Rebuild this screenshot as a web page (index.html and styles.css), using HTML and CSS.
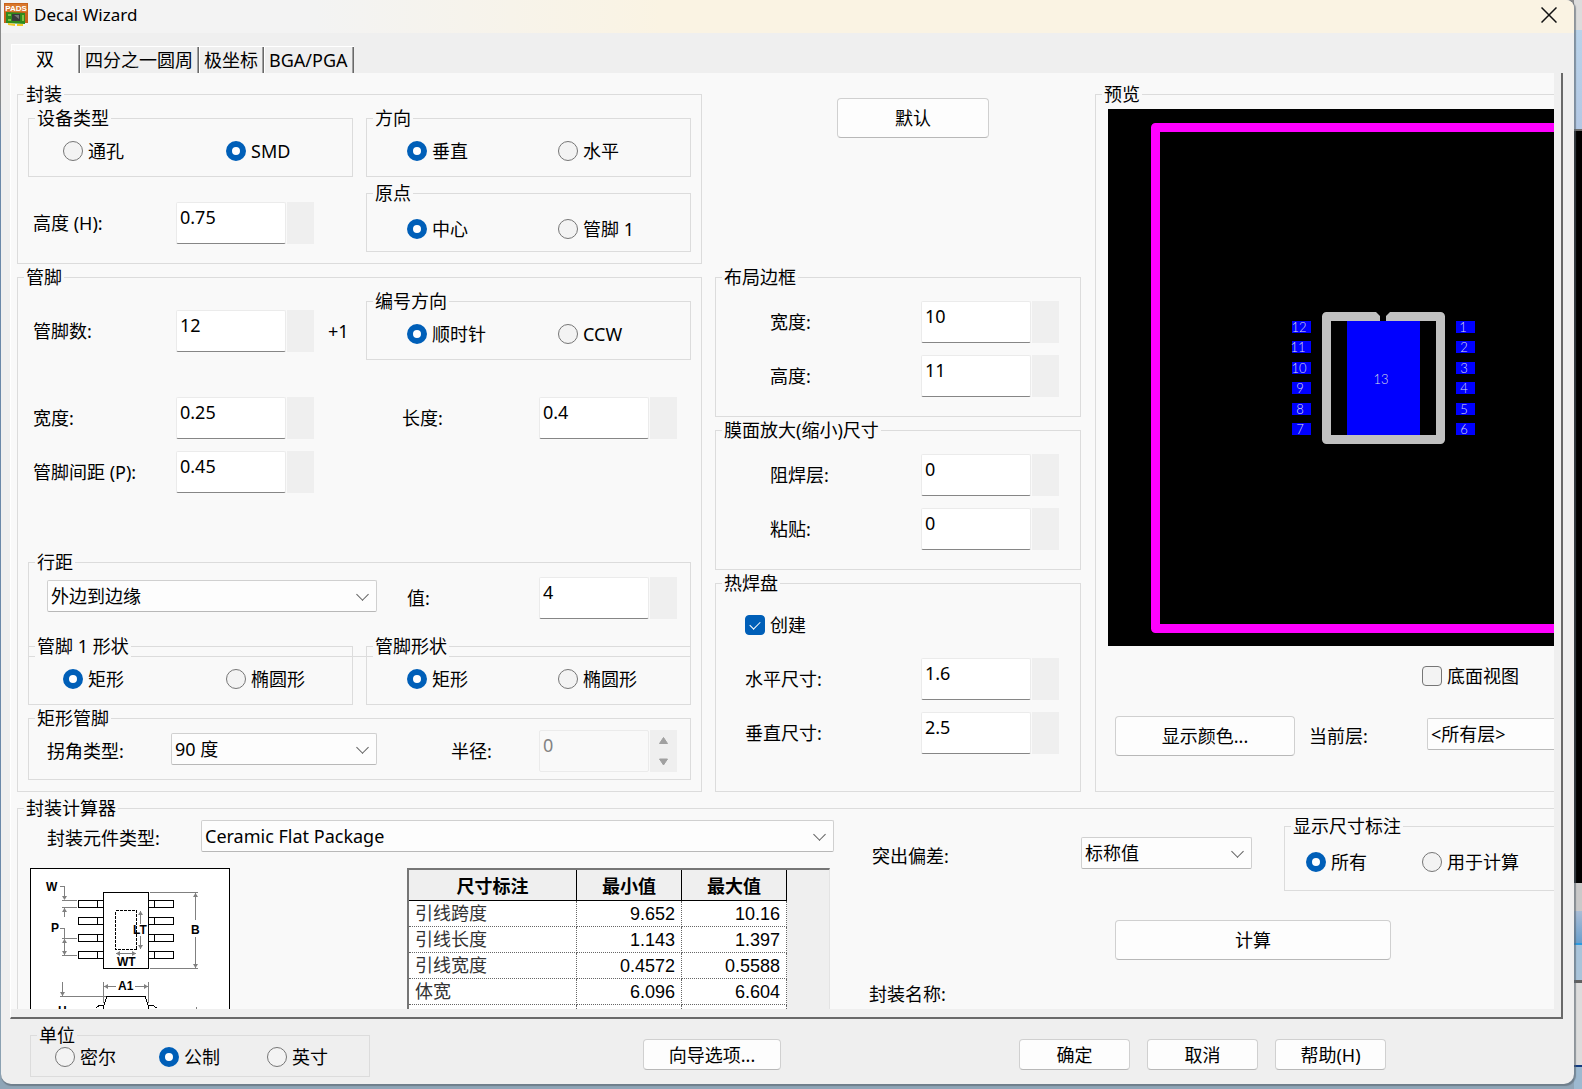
FILE: index.html
```html
<!DOCTYPE html>
<html lang="zh-CN">
<head>
<meta charset="utf-8">
<title>Decal Wizard</title>
<link rel="stylesheet" href="styles.css">
</head>
<body>
<main class="window">
  <header class="titlebar">
    <svg class="app-icon" width="24" height="24" viewBox="0 0 24 24" aria-hidden="true">
      <rect width="24" height="20" fill="#c8631c"/>
      <rect x="1" y="1" width="22" height="8" fill="#d9772c"/>
      <text x="12" y="8" text-anchor="middle" class="app-icon-text">PADS</text>
      <path d="M2 9l19 1v11l-19-1z" fill="#2f8a1d"/>
      <path d="M4 11h3v2H4zM4 16h3v2H4zM18 12h2v6h-2z" fill="#7fc043"/>
      <rect x="8" y="11" width="8" height="7" fill="#3b3b3b"/>
      <path d="M10 12h5v4z" fill="#777"/>
      <path d="M4 20l7 1v2l-7-1zM13 21h6v2h-6z" fill="#f2c81e"/>
    </svg>
    <h1 class="title">Decal Wizard</h1>
    <button class="close" type="button" aria-label="关闭">
      <svg width="16" height="16" viewBox="0 0 16 16"><path d="M.5.5l15 15M15.5.5l-15 15" stroke="#111" stroke-width="1.500" fill="none"/></svg>
    </button>
  </header>

  <nav class="tabs" role="tablist">
    <button class="tab tab-active" type="button" role="tab" aria-selected="true">双</button>
    <button class="tab" type="button" role="tab">四分之一圆周</button>
    <button class="tab" type="button" role="tab">极坐标</button>
    <button class="tab" type="button" role="tab">BGA/PGA</button>
  </nav>

  <section class="pane">
    <div class="page">
      <div class="columns">
        <div class="column">
          <fieldset class="group package">
            <legend>封装</legend>
            <div class="stack">
              <fieldset class="group options options-a">
                <legend>设备类型</legend>
                <label class="choice"><input type="radio" name="device">通孔</label>
                <label class="choice"><input type="radio" name="device" checked>SMD</label>
              </fieldset>
              <div class="field-row height-row">
                <label for="height">高度 (H):</label>
                <span class="number"><input id="height" type="text" value="0.75"><span class="spin"></span></span>
              </div>
            </div>
            <div class="stack stack-gap">
              <fieldset class="group options options-b">
                <legend>方向</legend>
                <label class="choice"><input type="radio" name="orient" checked>垂直</label>
                <label class="choice"><input type="radio" name="orient">水平</label>
              </fieldset>
              <fieldset class="group options options-b options-low">
                <legend>原点</legend>
                <label class="choice"><input type="radio" name="origin" checked>中心</label>
                <label class="choice"><input type="radio" name="origin">管脚 1</label>
              </fieldset>
            </div>
          </fieldset>

          <fieldset class="group pins">
            <legend>管脚</legend>
            <div class="halves">
              <div class="field-row count-row">
                <label for="count">管脚数:</label>
                <span class="number"><input id="count" type="text" value="12"><span class="spin"></span></span>
                <span class="plus">+1</span>
              </div>
              <fieldset class="group options options-b">
                <legend>编号方向</legend>
                <label class="choice"><input type="radio" name="numdir" checked>顺时针</label>
                <label class="choice"><input type="radio" name="numdir">CCW</label>
              </fieldset>
            </div>
            <div class="pin-sizes">
              <label for="pin-w">宽度:</label>
              <span class="number"><input id="pin-w" type="text" value="0.25"><span class="spin"></span></span>
              <label for="pin-l">长度:</label>
              <span class="number"><input id="pin-l" type="text" value="0.4"><span class="spin"></span></span>
              <label for="pitch">管脚间距 (P):</label>
              <span class="number"><input id="pitch" type="text" value="0.45"><span class="spin"></span></span>
            </div>
            <fieldset class="group spacing">
              <legend>行距</legend>
              <span class="select"><select aria-label="行距"><option>外边到边缘</option></select></span>
              <label for="row-v">值:</label>
              <span class="number"><input id="row-v" type="text" value="4"><span class="spin"></span></span>
            </fieldset>
            <div class="halves shapes">
              <fieldset class="group options options-a">
                <legend>管脚 1 形状</legend>
                <label class="choice"><input type="radio" name="shape1" checked>矩形</label>
                <label class="choice"><input type="radio" name="shape1">椭圆形</label>
              </fieldset>
              <fieldset class="group options options-b">
                <legend>管脚形状</legend>
                <label class="choice"><input type="radio" name="shape" checked>矩形</label>
                <label class="choice"><input type="radio" name="shape">椭圆形</label>
              </fieldset>
            </div>
            <fieldset class="group corners">
              <legend>矩形管脚</legend>
              <label for="corner">拐角类型:</label>
              <span class="select"><select id="corner"><option>90 度</option></select></span>
              <label for="radius">半径:</label>
              <span class="number"><input id="radius" type="text" value="0" disabled><span class="spin"><svg width="27" height="42" viewBox="0 0 27 42"><path d="M13.500 7.500l4 6h-8zM9.500 29h8l-4 6z" fill="#a0a0a0" stroke="#a0a0a0" stroke-linejoin="round"/></svg></span></span>
            </fieldset>
          </fieldset>
        </div>

        <div class="column">
          <button class="btn default-btn" type="button">默认</button>
          <fieldset class="group sizes">
            <legend>布局边框</legend>
            <label for="lay-w">宽度:</label>
            <span class="number"><input id="lay-w" type="text" value="10"><span class="spin"></span></span>
            <label for="lay-h">高度:</label>
            <span class="number"><input id="lay-h" type="text" value="11"><span class="spin"></span></span>
          </fieldset>
          <fieldset class="group sizes">
            <legend>膜面放大(缩小)尺寸</legend>
            <label for="solder">阻焊层:</label>
            <span class="number"><input id="solder" type="text" value="0"><span class="spin"></span></span>
            <label for="paste">粘贴:</label>
            <span class="number"><input id="paste" type="text" value="0"><span class="spin"></span></span>
          </fieldset>
          <fieldset class="group sizes thermal">
            <legend>热焊盘</legend>
            <label class="choice create"><input type="checkbox" checked>创建</label>
            <label for="th-x">水平尺寸:</label>
            <span class="number"><input id="th-x" type="text" value="1.6"><span class="spin"></span></span>
            <label for="th-y">垂直尺寸:</label>
            <span class="number"><input id="th-y" type="text" value="2.5"><span class="spin"></span></span>
          </fieldset>
        </div>

        <fieldset class="group preview">
          <legend>预览</legend>
          <svg class="canvas" role="img" aria-label="封装预览">
            <rect x="47.500" y="18.500" width="700" height="501" fill="none" stroke="#f0f" stroke-width="9" stroke-linejoin="round"/>
            <rect x="239" y="212" width="73" height="114" fill="#00f"/>
            <path d="M268 207.500H218.500V330.500H332.500V207.500H282" fill="none" stroke="#c0c0c0" stroke-width="9" stroke-linejoin="round"/>
            <path d="M268 203l4 4v5h-4zM282 203l-4 4v5h4z" fill="#c0c0c0"/>
            <g fill="#00f">
              <rect x="184" y="212" width="19" height="12"/><rect x="184" y="232" width="19" height="12"/>
              <rect x="184" y="253" width="19" height="12"/><rect x="184" y="273" width="19" height="12"/>
              <rect x="184" y="294" width="19" height="12"/><rect x="184" y="314" width="19" height="12"/>
              <rect x="348" y="212" width="19" height="12"/><rect x="348" y="232" width="19" height="12"/>
              <rect x="348" y="253" width="19" height="12"/><rect x="348" y="273" width="19" height="12"/>
              <rect x="348" y="294" width="19" height="12"/><rect x="348" y="314" width="19" height="12"/>
            </g>
            <g class="pad-text">
              <text x="191" y="223">12</text><text x="190" y="243">11</text><text x="191" y="264">10</text>
              <text x="192" y="284">9</text><text x="192" y="305">8</text><text x="192" y="325">7</text>
              <text x="355" y="223">1</text><text x="356" y="243">2</text><text x="356" y="264">3</text>
              <text x="356" y="284">4</text><text x="356" y="305">5</text><text x="356" y="325">6</text>
              <text x="273" y="275">13</text>
            </g>
          </svg>
          <label class="choice bottom-view"><input type="checkbox">底面视图</label>
          <div class="layer-row">
            <button class="btn colors-btn" type="button">显示颜色...</button>
            <label for="layer">当前层:</label>
            <span class="select layer"><select id="layer"><option>&lt;所有层&gt;</option></select></span>
          </div>
        </fieldset>
      </div>

      <fieldset class="group calculator">
        <legend>封装计算器</legend>
        <div class="calc-left">
          <div class="type-row">
            <label for="ptype">封装元件类型:</label>
            <span class="select"><select id="ptype"><option>Ceramic Flat Package</option></select></span>
          </div>
          <div class="calc-detail">
            <svg class="diagram" width="200" height="260" viewBox="0 0 200 260" role="img" aria-label="尺寸示意图">
              <rect x=".5" y=".5" width="199" height="259" fill="#fff" stroke="#000"/>
              <g fill="none" stroke="#000" shape-rendering="crispEdges">
                <rect x="73.500" y="24.500" width="45" height="76"/>
                <path d="M73.500 32.500h-25v7h25M67.500 32.500v7M73.500 49.500h-25v7h25M67.500 49.500v7M73.500 66.500h-25v7h25M67.500 66.500v7M73.500 83.500h-25v7h25M67.500 83.500v7"/>
                <path d="M118.500 32.500h25v7h-25M124.500 32.500v7M118.500 49.500h25v7h-25M124.500 49.500v7M118.500 66.500h25v7h-25M124.500 66.500v7M118.500 83.500h25v7h-25M124.500 83.500v7"/>
                <rect x="85.500" y="42.500" width="21" height="39" stroke-dasharray="3 1"/>
                <path d="M66 140l4-3h4l3-8.500h38l3 8.500h4l5 3M73.500 137v14h45v-14"/>
              </g>
              <g fill="none" stroke="#808080" shape-rendering="crispEdges">
                <path d="M30 18.500h4.500V31M32 32.500h15M32 39.500h15M34.500 40v9M30 60.500h4.500V70M32 70.500h15M32 87.500h15M34.500 71v16"/>
                <path d="M110.500 43v13M110.500 68v13M86 85.500h20M120 24.500h48M120 100.500h48M165.500 25v27M165.500 69v31"/>
                <path d="M74 118.500h12M105 118.500h13M73.500 114v21M118.500 114v21M32.500 114v14M30 128.500h46M166.500 139v20"/>
              </g>
              <path fill="#808080" d="M32 28h5l-2.500 4zM32 44h5l-2.500-4zM32 75h5l-2.500-4zM32 83h5l-2.500 4zM108 47h5l-2.500-4zM108 77h5l-2.500 4zM163 29h5l-2.500-4zM163 96h5l-2.500 4zM30 124h5l-2.500 4zM78 116v5l-4-2.500zM114 116v5l4-2.500zM90 83v5l-4-2.500zM102 83v5l4-2.500z"/>
              <g class="dim-text">
                <text x="16" y="23">W</text><text x="21" y="64">P</text><text x="103" y="66">LT</text>
                <text x="87" y="98">WT</text><text x="161" y="66">B</text><text x="88" y="122">A1</text><text x="28" y="147">H</text>
              </g>
            </svg>
            <div class="table-box">
              <table class="dims">
                <thead><tr><th class="col-name">尺寸标注</th><th>最小值</th><th>最大值</th></tr></thead>
                <tbody>
                  <tr><td>引线跨度</td><td>9.652</td><td>10.16</td></tr>
                  <tr><td>引线长度</td><td>1.143</td><td>1.397</td></tr>
                  <tr><td>引线宽度</td><td>0.4572</td><td>0.5588</td></tr>
                  <tr><td>体宽</td><td>6.096</td><td>6.604</td></tr>
                  <tr><td></td><td></td><td></td></tr>
                </tbody>
              </table>
            </div>
          </div>
        </div>
        <div class="calc-right">
          <div class="bias-row">
            <label for="bias">突出偏差:</label>
            <span class="select"><select id="bias"><option>标称值</option></select></span>
            <fieldset class="group options options-c">
              <legend>显示尺寸标注</legend>
              <label class="choice"><input type="radio" name="show" checked>所有</label>
              <label class="choice"><input type="radio" name="show">用于计算</label>
            </fieldset>
          </div>
          <button class="btn calc-btn" type="button">计算</button>
          <span class="name-label">封装名称:</span>
        </div>
      </fieldset>
    </div>
  </section>

  <footer class="footer">
    <fieldset class="group units">
      <legend>单位</legend>
      <label class="choice"><input type="radio" name="unit">密尔</label>
      <label class="choice"><input type="radio" name="unit" checked>公制</label>
      <label class="choice"><input type="radio" name="unit">英寸</label>
    </fieldset>
    <button class="btn wizard-btn" type="button">向导选项...</button>
    <div class="dialog-buttons">
      <button class="btn" type="button">确定</button>
      <button class="btn" type="button">取消</button>
      <button class="btn" type="button">帮助(H)</button>
    </div>
  </footer>
</main>
</body>
</html>
```

FILE: styles.css
```css
* { box-sizing: border-box; }

body {
  margin: 0;
  height: 100vh;
  padding: 0 8px 5px 1px;
  overflow: hidden;
  font: 18px/24px "Noto Sans", "Noto Sans CJK SC", sans-serif;
  color: #000;
  background:
    linear-gradient(#dcdcdc 30px, #b9d3ea 30px, #b3c8e4 129px, #6e6e6e 129px, #6e6e6e 131px,
      #000 131px, #000 883px, #c9c9c9 883px, #c9c9c9 911px, #a9bdd6 911px, #6a9fcc 943px,
      #2a9ae0 943px, #2a9ae0 945px, #a9c4da 945px, #a9c4da 980px, #606060 980px, #606060 983px,
      #dcdcdc 983px, #dcdcdc 1065px, #123a80 1065px, #123a80 1067px, #9db9d0 1067px)
      right / 8px 100% no-repeat,
    linear-gradient(#8d8d8d 100px, #6d8cae 130px, #6d8cae 880px, #8fa5b7 1000px);
}

.window {
  display: flex;
  flex-direction: column;
  height: 100%;
  background: #efefef;
  border-radius: 0 8px 10px 10px;
  box-shadow: 1px 1px 1px 1px rgba(90, 100, 110, .6);
  overflow: hidden;
}

button, input, select { font: inherit; color: inherit; }

/* Title bar */
.titlebar {
  display: flex;
  align-items: center;
  flex: none;
  height: 33px;
  padding: 0 17px 4px 3px;
  background: linear-gradient(90deg, #f3f3f3 20%, #faf3e3 42%);
}
.app-icon-text { font: bold 8px "Liberation Sans", sans-serif; fill: #fff; }
.title { margin: 0 auto 0 6px; font-size: 17px; font-weight: 400; }
.close { display: flex; padding: 0; border: 0; background: none; }

/* Tabs */
.tabs { display: flex; flex: none; align-items: flex-end; height: 40px; padding-left: 10px; }
.tab {
  height: 27px;
  padding: 0 6px 0 4px;
  border: 0;
  border-top: 1px solid #fff;
  border-left: 1px solid #fff;
  background: #efefef;
  box-shadow: inset -1px 0 #696969, inset -2px 0 #a0a0a0;
  line-height: 26px;
  white-space: nowrap;
}
.tab-active { width: 69px; height: 29px; background: #f9f9f9; }

.pane {
  flex: 1;
  min-height: 0;
  margin: 0 11px 0 9px;
  padding: 0 7px 8px 0;
  border: solid #696969;
  border-width: 0 2px 2px 0;
  border-left: 1px solid #fff;
}
.page { height: 100%; overflow: hidden; padding: 10px 0 0 6px; background: #f9f9f9; }

/* Group boxes: --indent is the left padding, which the caption ignores */
.group {
  --indent: 0px;
  min-width: 0;
  margin: 0;
  padding: 0 0 0 var(--indent);
  border: 1px solid #dcdcdc;
}
.group > legend {
  margin-left: calc(6px - var(--indent));
  padding: 0 2px;
  line-height: 23px;
  background: #f9f9f9;
  white-space: nowrap;
}

/* Radios and check boxes */
.choice { display: flex; align-items: center; gap: 5px; height: 20px; white-space: nowrap; }
.choice input {
  flex: none;
  appearance: none;
  width: 20px;
  height: 20px;
  margin: 0;
  border: 1px solid #767676;
  background: #f3f3f3;
}
.choice input[type="radio"] { border-radius: 50%; }
.choice input[type="radio"]:checked { border: 6px solid #005fb8; background: #fff; }
.choice input[type="checkbox"] { display: grid; place-items: center; border-radius: 4px; }
.choice input[type="checkbox"]:checked { border-color: #005fb8; background: #005fb8; }
.choice input[type="checkbox"]:checked::after {
  content: "";
  width: 9px;
  height: 5px;
  margin-bottom: 3px;
  border: solid #fff;
  border-width: 0 0 1px 1px;
  transform: rotate(-45deg);
}

/* Number box with its spinner */
.number { display: flex; gap: 1px; height: 42px; }
.number input {
  width: 110px;
  height: 42px;
  padding: 0 3px 12px;
  border: 1px solid #ebebeb;
  border-bottom-color: #868686;
  border-radius: 2px;
  background: #fff;
}
.number input:disabled { background: #f9f9f9; border-color: #ebebeb; color: #838383; }
.spin { width: 27px; background: #efefef; }
.spin svg { display: block; }

/* Drop-downs */
.select { position: relative; display: block; height: 32px; }
.select select {
  display: block;
  appearance: none;
  width: 100%;
  height: 32px;
  padding: 0 28px 0 3px;
  border: 1px solid #d0d0d0;
  border-bottom-color: #b8b8b8;
  border-radius: 2px;
  background: #fdfdfd;
}
.select::after {
  content: "";
  position: absolute;
  right: 10px;
  top: 10px;
  width: 8px;
  height: 8px;
  border: solid #5f5f5f;
  border-width: 0 1px 1px 0;
  transform: rotate(45deg);
  pointer-events: none;
}

.btn {
  height: 40px;
  padding: 0;
  border: 1px solid #d0d0d0;
  border-bottom-color: #b8b8b8;
  border-radius: 4px;
  background: #fdfdfd;
  white-space: nowrap;
}

/* Main columns */
.columns { display: grid; grid-template-columns: 685px 366px 1fr; column-gap: 13px; margin-right: -40px; }
.column { display: flex; flex-direction: column; gap: 2px; }

.package, .pins { --indent: 10px; padding-top: 1px; padding-bottom: 11px; }
.package, .halves { display: grid; grid-template-columns: 325px 325px; gap: 13px; }
.stack { display: flex; flex-direction: column; }
.stack-gap { gap: 5px; }

.options { display: grid; align-content: start; padding-top: 11px; padding-bottom: 15px; }
.options-a { --indent: 34px; grid-template-columns: 163px 1fr; }
.options-b { --indent: 40px; grid-template-columns: 151px 1fr; }
.options-c { --indent: 21px; grid-template-columns: 116px 1fr; margin-left: 32px; padding-top: 14px; padding-bottom: 18px; }
.options-low { padding-top: 14px; padding-bottom: 12px; }

.field-row { display: grid; grid-template-columns: 143px auto 1fr; align-items: center; padding-left: 5px; }
.height-row { margin-top: 25px; }
.count-row { align-self: start; margin-top: 20px; }
.plus { margin-left: 14px; }

.pin-sizes {
  display: grid;
  grid-template-columns: 143px 226px 137px auto;
  row-gap: 12px;
  align-items: center;
  margin-top: 37px;
  padding-left: 5px;
}
.spacing, .corners { --indent: 18px; display: grid; align-items: center; margin-right: 10px; }
.spacing {
  grid-template-columns: 360px 132px auto;
  margin-top: 58px;
  padding-top: 3px;
  padding-bottom: 37px;
}
.corners { grid-template-columns: 124px 280px 88px auto; margin-top: 2px; padding-bottom: 7px; }
.spacing .select, .corners .select { margin-bottom: 4px; }
.spacing .select { width: 330px; }
.corners .select { width: 206px; }
.shapes { position: relative; margin-top: -22px; }

.default-btn { width: 152px; margin: 15px 0 126px 122px; }
.sizes {
  --indent: 54px;
  display: grid;
  grid-template-columns: 151px auto;
  row-gap: 12px;
  align-items: center;
  padding-top: 12px;
  padding-bottom: 19px;
}
.thermal {
  --indent: 29px;
  flex: 1;
  align-content: start;
  grid-template-columns: 176px auto;
  padding-top: 20px;
}
.create { grid-column: 1 / -1; margin-bottom: 11px; }

.preview { --indent: 12px; margin-left: 1px; padding-top: 3px; }
.canvas { display: block; width: 100%; height: 537px; background: #000; }
.pad-text { font: 300 13px Lato, "Liberation Sans", sans-serif; fill: #d8d8e8; text-anchor: middle; }
.bottom-view { margin: 20px 0 30px 314px; }
.layer-row { display: grid; grid-template-columns: 180px 104px 1fr; column-gap: 14px; padding-left: 7px; }
.layer-row label { padding-top: 8px; }
.layer { margin-top: 2px; }

/* Calculator */
.calculator { display: grid; grid-template-columns: 816px 1fr; column-gap: 35px; margin: 5px -40px 0 0; }
.type-row { display: grid; grid-template-columns: 154px 1fr; padding-left: 29px; }
.type-row label { padding-top: 6px; }
.calc-detail { display: flex; gap: 177px; margin-top: 16px; padding-left: 12px; }
.diagram { flex: none; }
.dim-text { font: bold 12px "Liberation Sans", sans-serif; }
.table-box {
  width: 423px;
  border: 2px solid #767676;
  border-right: 1px solid #e3e3e3;
  border-bottom: 0;
  background: #efefef;
}
.dims { border-collapse: separate; border-spacing: 0; table-layout: fixed; width: 378px; background: #fff; }
.dims th {
  height: 31px;
  padding: 0;
  border: solid #000;
  border-width: 0 1px 1px 0;
  background: #efefef;
  font: bold 18px/24px "Noto Sans CJK SC", sans-serif;
}
.dims .col-name { width: 168px; }
.dims td {
  height: 26px;
  padding: 0 6px;
  border: dotted #666;
  border-width: 0 1px 1px 0;
  font: 18px/24px "Liberation Sans", "Noto Sans CJK SC", sans-serif;
  text-align: right;
}
.dims td:first-child { text-align: left; color: #333; }

.calc-right { display: flex; flex-direction: column; align-items: flex-start; margin-top: -5px; }
.bias-row { display: grid; grid-template-columns: 212px 171px 1fr; align-items: center; align-self: stretch; }
.bias-row > label { padding: 6px 0 0 3px; }
.calc-btn { width: 276px; margin: 29px 0 22px 246px; }

/* Footer */
.footer { display: flex; flex: none; align-items: flex-start; height: 65px; padding: 5px 188px 0 29px; }
.units { --indent: 24px; display: grid; grid-template-columns: 104px 108px 1fr; width: 340px; padding-bottom: 9px; }
.units > legend { background: #efefef; }
.footer .btn { height: 31px; margin-top: 15px; }
.wizard-btn { width: 138px; margin-left: 273px; }
.dialog-buttons { display: grid; grid-template-columns: repeat(3, 111px); gap: 17px; margin-left: auto; }
```
